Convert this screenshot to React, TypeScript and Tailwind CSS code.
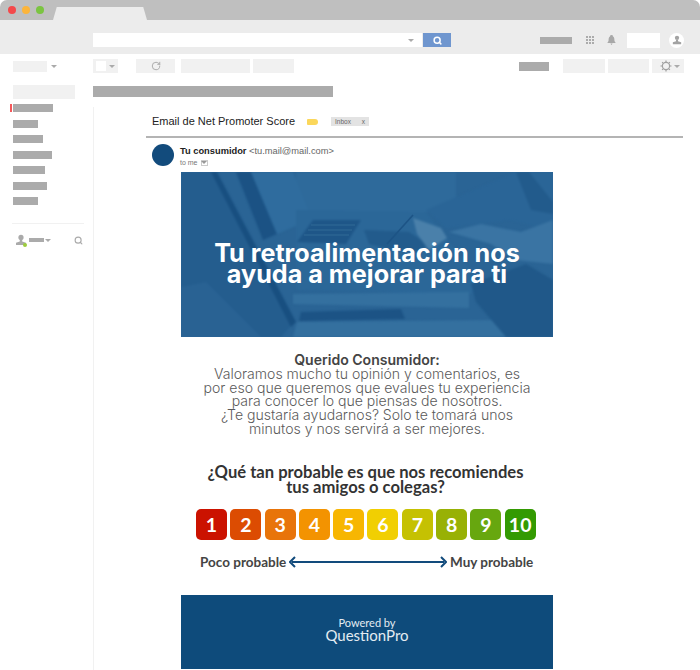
import React from 'react';
import { RotateCw, Search } from 'lucide-react';

const scores = [
  { n: 1, c: 'bg-[#cb1200]' },
  { n: 2, c: 'bg-[#dc4c02]' },
  { n: 3, c: 'bg-[#e8740a]' },
  { n: 4, c: 'bg-[#f39301]' },
  { n: 5, c: 'bg-[#f7b602]' },
  { n: 6, c: 'bg-[#f1cf02]' },
  { n: 7, c: 'bg-[#c5c102]' },
  { n: 8, c: 'bg-[#98b105]' },
  { n: 9, c: 'bg-[#67a70f]' },
  { n: 10, c: 'bg-[#339a02]' },
];

const navItems = [
  { w: 'w-[40px]', active: true },
  { w: 'w-[25px]' },
  { w: 'w-[30px]' },
  { w: 'w-[39px]' },
  { w: 'w-[32px]' },
  { w: 'w-[34px]' },
  { w: 'w-[25px]' },
];

const Caret = ({ className }: { className: string }) => (
  <span className={`block w-0 h-0 border-x-[3px] border-x-transparent border-t-[3px] ${className}`} />
);

const UserGlyph = ({ className }: { className: string }) => (
  <svg className={className} viewBox="0 0 12 12" fill="currentColor">
    <circle cx="6" cy="3.4" r="2.6" />
    <path d="M4.8 6h2.400v1.400l3.800 1.400V11H1V8.800l3.800-1.400z" />
  </svg>
);

const HeroPhoto = () => (
  <svg className="absolute inset-0 w-full h-full" viewBox="0 0 372 165" preserveAspectRatio="none">
    <rect width="372" height="165" fill="#2a6495" />
    <g style={{ filter: 'blur(1px)' }}>
      <rect x="115" width="160" height="40" fill="#2e6a9b" />
      <polygon points="0,0 33,0 113,150 100,165 0,165" fill="#245d8e" />
      <polygon points="30,0 36,0 115,150 110,155" fill="#184f80" />
      <polygon points="55,0 70,0 96,62 82,68" fill="#1b5284" />
      <polygon points="70,0 112,0 131,47 96,62" fill="#2f6c9e" />
      <polygon points="115,38 245,40 300,110 290,122 115,118" fill="#2b6798" />
      <polygon points="132,48 180,48 165,72 116,70" fill="#1e5688" />
      <polygon points="183,58 228,60 246,72 240,80 205,76 188,72" fill="#225b8c" />
      <polygon points="245,38 335,0 372,0 372,60 330,48 265,56" fill="#2a6597" />
      <polygon points="232,46 260,56 266,66 248,78 236,62" fill="#4a80aa" />
      <polygon points="268,60 300,52 340,60 372,48 372,92 335,88 310,72" fill="#3a74a3" />
      <polygon points="335,0 348,0 372,30 372,42 350,38" fill="#225b8c" />
      <polygon points="112,122 288,120 288,136 112,132" fill="#34709f" />
      <polygon points="120,140 220,137 224,147 118,149" fill="#1c5385" />
      <polygon points="116,150 318,148 330,165 112,165" fill="#34709f" />
      <polygon points="290,112 345,92 372,108 372,165 325,165 295,130" fill="#205889" />
      <polygon points="0,115 25,110 80,165 0,165" fill="#296293" />
    </g>
    <g stroke="#3a739f" strokeWidth="0.7">
      <line x1="130" y1="53" x2="174" y2="53" />
      <line x1="127" y1="58" x2="171" y2="58" />
      <line x1="123" y1="63" x2="168" y2="63" />
    </g>
    <line x1="232" y1="43" x2="206" y2="72" stroke="#1d5486" strokeWidth="1.6" />
  </svg>
);

const App: React.FC = () => {
  return (
    <div className="w-[700px] h-[670px] overflow-hidden bg-white font-['Liberation_Sans',sans-serif]">
      {/* browser tab strip */}
      <div className="h-[20px] bg-[#bfbfbf] rounded-t-[7px] flex items-center pl-[8px]">
        <span className="w-[8px] h-[8px] rounded-full bg-[#f4494b]" />
        <span className="w-[8px] h-[8px] rounded-full bg-[#fcb53b] ml-[6px]" />
        <span className="w-[8px] h-[8px] rounded-full bg-[#7bc441] ml-[6px]" />
        <span className="w-[94px] h-[13px] self-end bg-[#ececec] ml-[9px] rounded-t-[3px] [clip-path:polygon(4%_0,96%_0,100%_100%,0_100%)]" />
      </div>

      {/* gmail header */}
      <div className="h-[34px] bg-[#ececec] flex items-center pt-[6px] pl-[93px]">
        <div className="w-[329px] h-[14px] bg-white flex items-center justify-end pr-[8px]">
          <Caret className="border-t-[#aaaaaa]" />
        </div>
        <div className="w-[28px] h-[14px] ml-[1px] bg-[#6f96cf] flex items-center justify-center">
          <Search className="w-[9px] h-[9px] text-white" strokeWidth={4} />
        </div>
        <div className="w-[32px] h-[7px] ml-[89px] bg-[#ababab]" />
        <div className="grid grid-cols-3 gap-[1px] w-[8px] ml-[14px]">
          {Array.from({ length: 9 }).map((_, i) => (
            <span key={i} className="h-[2px] bg-[#ababab]" />
          ))}
        </div>
        <svg className="w-[9px] h-[10px] ml-[13px] text-[#a8a8a8]" viewBox="0 0 9 10" fill="currentColor">
          <path d="M3 1.400a1.500 1.400 0 0 1 3 0C7.200 2 7.400 3.400 7.400 5c0 1.300.5 2 1.100 2.600V8H.5v-.4C1.100 7 1.600 6.300 1.600 5c0-1.600.2-3 1.400-3.600zM3.400 8.600h2.200L4.500 10z" />
        </svg>
        <div className="w-[33px] h-[15px] ml-[11px] bg-white" />
        <div className="w-[15px] h-[15px] ml-[9px] rounded-full bg-white flex items-center justify-center">
          <UserGlyph className="w-[10px] h-[10px] text-[#a3a3a3]" />
        </div>
      </div>

      <div className="flex">
        {/* sidebar */}
        <aside className="w-[93px] shrink-0 pt-[7px]">
          <div className="flex items-center pl-[13px] h-[11px]">
            <div className="w-[34px] h-[11px] bg-[#f1f1f1]" />
            <Caret className="ml-[4px] border-t-[#aaaaaa]" />
          </div>
          <div className="w-[62px] h-[14px] ml-[13px] mt-[13px] bg-[#f1f1f1]" />
          <div className="mt-[5px] flex flex-col gap-[7.5px]">
            {navItems.map((item, i) => (
              <div key={i} className="flex items-center h-[8px]">
                <span className={`w-[2px] h-[8px] ml-[10px] ${item.active ? 'bg-[#f4585a]' : ''}`} />
                <span className={`h-[8px] ml-[1px] bg-[#ababab] ${item.w}`} />
              </div>
            ))}
          </div>
          <div className="w-[72px] ml-[12px] mt-[18px] border-t border-[#f1f1f1]" />
          <div className="flex items-center mt-[10px] pl-[15px]">
            <span className="relative w-[12px] h-[12px]">
              <UserGlyph className="w-[12px] h-[12px] text-[#aaaaaa]" />
              <span className="absolute right-0 bottom-[-1px] w-[4px] h-[4px] rounded-full bg-[#9ccc3c]" />
            </span>
            <span className="w-[15px] h-[4px] ml-[2px] bg-[#ababab]" />
            <Caret className="ml-[1px] border-t-[#aaaaaa]" />
            <Search className="w-[9px] h-[9px] ml-[23px] text-[#aaaaaa]" strokeWidth={3} />
          </div>
        </aside>

        {/* main column */}
        <main className="flex-1 min-w-0">
          {/* toolbar */}
          <div className="flex items-center h-[14px] mt-[5px]">
            <div className="w-[25px] h-[14px] bg-[#f1f1f1] flex items-center pl-[3px]">
              <span className="w-[10px] h-[10px] bg-white" />
              <Caret className="ml-[3px] border-t-[#aaaaaa]" />
            </div>
            <div className="w-[39px] h-[14px] ml-[18px] bg-[#f1f1f1] flex items-center justify-center">
              <RotateCw className="w-[10px] h-[10px] text-[#a0a0a0]" strokeWidth={2} />
            </div>
            <div className="w-[69px] h-[14px] ml-[6px] bg-[#f1f1f1]" />
            <div className="w-[41px] h-[14px] ml-[3px] bg-[#f1f1f1]" />
            <div className="w-[30px] h-[9px] ml-[225px] bg-[#ababab]" />
            <div className="w-[42px] h-[14px] ml-[14px] bg-[#f1f1f1]" />
            <div className="w-[41px] h-[14px] ml-[3px] bg-[#f1f1f1]" />
            <div className="w-[32px] h-[14px] ml-[3px] bg-[#f1f1f1] flex items-center pl-[8px]">
              <svg className="w-[12px] h-[12px] text-[#a0a0a0]" viewBox="0 0 12 12" fill="none" stroke="currentColor">
                <circle cx="6" cy="6" r="3.600" strokeWidth="1.200" />
                <path d="M6 .5v1.500M6 10v1.500M.5 6H2M10 6h1.500M2.100 2.100l1 1M8.900 8.900l1 1M9.900 2.100l-1 1M3.100 8.900l-1 1" strokeWidth="1.200" />
              </svg>
              <Caret className="ml-[2px] border-t-[#aaaaaa]" />
            </div>
          </div>

          <div className="w-[240px] h-[11px] mt-[13px] bg-[#ababab]" />

          {/* message */}
          <div className="mt-[10px] h-[563px] border-l border-[#f1f1f1] pl-[52px]">
            <div className="w-[537px] h-[31px] flex items-center pl-[6px] border-b-2 border-[#b4b4b4]">
              <h1 className="text-[11px] text-[#222222] whitespace-nowrap">Email de Net Promoter Score</h1>
              <span className="w-[11px] h-[6px] ml-[12px] bg-[#fbd75b] rounded-l-[1px] rounded-r-[3px]" />
              <span className="w-[38px] h-[9px] ml-[13px] bg-[#e3e3e3] flex items-center justify-between px-[4px] text-[6.5px] text-[#666666]">
                <span>Inbox</span>
                <span>x</span>
              </span>
            </div>

            <div className="flex pl-[6px] pt-[6px] h-[34px]">
              <span className="w-[22px] h-[22px] rounded-full bg-[#124b7c]" />
              <div className="ml-[6px] leading-none">
                <p className="text-[9.3px] text-[#666666] mt-[3px] whitespace-nowrap">
                  <b className="text-[#222222]">Tu consumidor</b> &lt;tu.mail@mail.com&gt;
                </p>
                <p className="text-[7px] text-[#777777] mt-[3px] flex items-center">
                  to me
                  <span className="w-[7px] h-[6px] ml-[3px] border border-[#cccccc] flex items-center justify-center">
                    <Caret className="border-t-[#999999] border-x-[2px] border-t-[2px]" />
                  </span>
                </p>
              </div>
            </div>

            {/* email body */}
            <div className="w-[372px] ml-[35px]">
              <div className="relative h-[165px] flex flex-col justify-center pt-[18px] overflow-hidden">
                <HeroPhoto />
                <h2 className="relative text-center text-white font-['Inter',sans-serif] font-bold text-[25.2px] leading-[21px]">
                  Tu retroalimentación nos
                  <br />
                  ayuda a mejorar para ti
                </h2>
              </div>

              <div className="mt-[16px] text-center font-['Inter',sans-serif] text-[14.05px] leading-[13.8px] text-[#5a5a5a]">
                <p className="font-semibold text-[#444444]">Querido Consumidor:</p>
                <p className="font-light">Valoramos mucho tu opinión y comentarios, es</p>
                <p className="font-light">por eso que queremos que evalues tu experiencia</p>
                <p className="font-light">para conocer lo que piensas de nosotros.</p>
                <p className="font-light">¿Te gustaría ayudarnos? Solo te tomará unos</p>
                <p className="font-light">minutos y nos servirá a ser mejores.</p>
              </div>

              <h3 className="mt-[29px] pr-[3px] text-center font-['Lato',sans-serif] font-bold text-[16.6px] leading-[15px] text-[#333333]">
                ¿Qué tan probable es que nos recomiendes
                <br />
                tus amigos o colegas?
              </h3>

              <div className="flex gap-[3.3px] mt-[14.5px] pl-[15px]">
                {scores.map((s) => (
                  <span
                    key={s.n}
                    className={`w-[31px] h-[31px] rounded-[5px] flex items-center justify-center text-white font-['Lato',sans-serif] font-bold text-[19.5px] ${s.c}`}
                  >
                    {s.n}
                  </span>
                ))}
              </div>

              <div className="flex items-center mt-[14px] pl-[19px] h-[16px] font-['Lato',sans-serif] font-bold text-[13.5px] text-[#444444] whitespace-nowrap">
                <span className="w-[89px]">Poco probable</span>
                <svg className="w-[158px] h-[12px] shrink-0" viewBox="0 0 158 12" fill="none" stroke="#124b7c">
                  <path d="M3 6h152" strokeWidth="1.800" />
                  <path d="M6 1 1 6l5 5M152 1l5 5-5 5" strokeWidth="2" />
                </svg>
                <span className="ml-[3px]">Muy probable</span>
              </div>

              <div className="mt-[25px] h-[74px] bg-[#0e4b7b] flex flex-col items-center justify-center text-[#e3ebf2] font-['Lato',sans-serif] pb-[6px]">
                <span className="text-[11px] leading-[11px]">Powered by</span>
                <span className="text-[15px] leading-[14px]">QuestionPro</span>
              </div>
            </div>
          </div>
        </main>
      </div>
    </div>
  );
};

export default App;
